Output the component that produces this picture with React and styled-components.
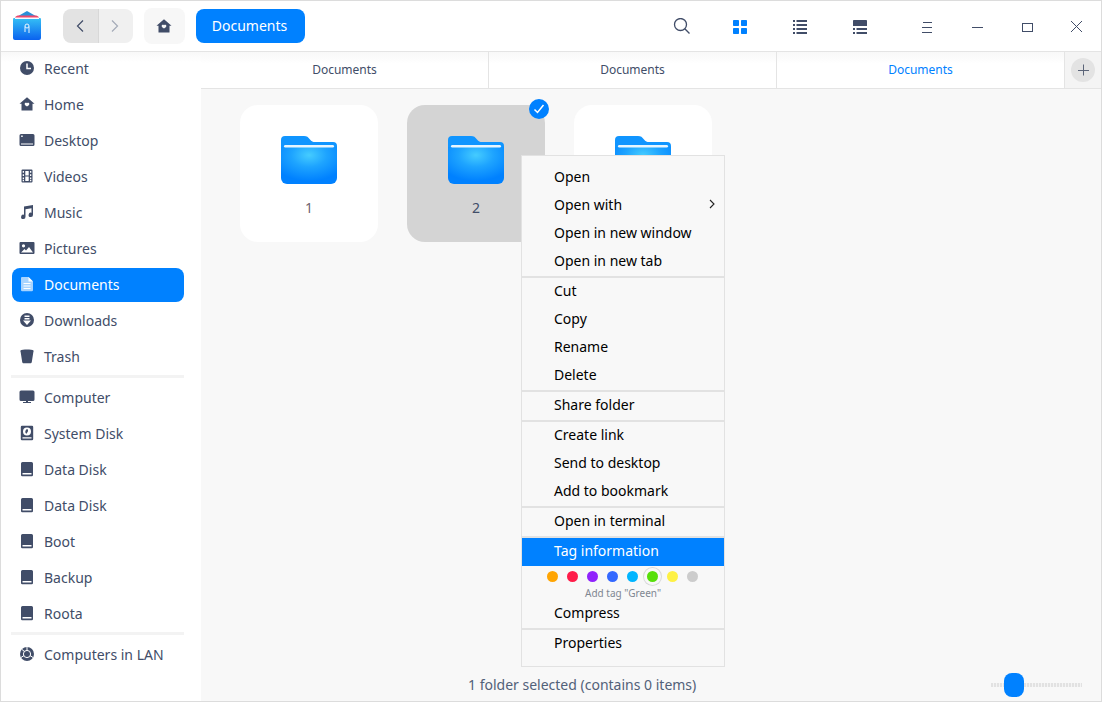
import React from "react"
import styled, { createGlobalStyle } from "styled-components"

const GlobalStyle = createGlobalStyle`
html, body {
    margin: 0;
    padding: 0;
    background: #fff;
}
* {
    box-sizing: border-box;
}
`

const INK = "#414d68"
const BLUE = "#0081ff"

const Window = styled.div`
position: relative;
display: flex;
flex-direction: column;
width: 1102px;
height: 702px;
border: 1px solid #dcdcdc;
background: #fff;
font-family: "Noto Sans", sans-serif;
font-size: 14px;
color: ${INK};
overflow: hidden;
`

const TitleBar = styled.header`
display: flex;
align-items: center;
height: 51px;
flex-shrink: 0;
padding-left: 11px;
border-bottom: 1px solid #e4e4e4;
`

const Logo = styled.svg`
width: 30px;
height: 30px;
margin-right: 21px;
`

const NavGroup = styled.div`
display: flex;
width: 70px;
height: 34px;
border-radius: 8px;
overflow: hidden;
margin-right: 11px;
`

const NavButton = styled.div`
display: flex;
align-items: center;
justify-content: center;
flex: 1;
padding-right: 1px;
background: ${(p) => (p.$active ? "#e3e3e3" : "#f0f0f0")};
border-right: ${(p) => (p.$active ? "1px solid #d8d8d8" : "none")};
color: ${(p) => (p.$active ? INK : "#a4abb8")};
`

const HomeButton = styled.div`
display: flex;
align-items: center;
justify-content: center;
width: 41px;
height: 36px;
padding-right: 2px;
border-radius: 8px;
background: #f7f7f7;
margin-right: 11px;
color: ${INK};
`

const CrumbButton = styled.div`
display: flex;
align-items: center;
justify-content: center;
width: 109px;
height: 34px;
padding: 0 2px 2px 0;
border-radius: 8px;
background: ${BLUE};
color: #fff;
`

const ToolSlot = styled.div`
position: absolute;
top: 0;
left: ${(p) => p.$x}px;
width: 50px;
height: 52px;
display: flex;
align-items: center;
justify-content: center;
color: ${(p) => p.$color || INK};
`

const Body = styled.div`
display: flex;
flex: 1;
min-height: 0;
`

const Sidebar = styled.nav`
width: 200px;
flex-shrink: 0;
padding: 0 17px 0 11px;
background: linear-gradient(#f8f8f8, #fff 10px);
`

const SideItem = styled.div`
display: flex;
align-items: center;
gap: 9px;
height: 34px;
margin-bottom: 2px;
padding: 0 0 2px 7px;
border-radius: 8px;
background: ${(p) => (p.$active ? BLUE : "transparent")};
color: ${(p) => (p.$active ? "#fff" : INK)};
`

const SideIcon = styled.svg`
width: 16px;
height: 16px;
flex-shrink: 0;
`

const SideDivider = styled.div`
height: 3px;
margin: -1px 0 3px -1px;
background: #f3f3f3;
`

const Main = styled.main`
display: flex;
flex-direction: column;
flex: 1;
min-width: 0;
background: #f8f8f8;
`

const TabBar = styled.div`
display: flex;
height: 37px;
flex-shrink: 0;
border-bottom: 1px solid #e4e4e4;
`

const Tab = styled.div`
display: flex;
align-items: center;
justify-content: center;
width: 288px;
padding-bottom: 2px;
font-size: 12px;
border-right: 1px solid #e4e4e4;
background: linear-gradient(#f8f8f8, #fff 12px);
color: ${(p) => (p.$active ? BLUE : INK)};
`

const AddTabCell = styled.div`
display: flex;
align-items: center;
justify-content: center;
flex: 1;
background: #f4f4f4;
`

const AddTabButton = styled.div`
display: flex;
align-items: center;
justify-content: center;
width: 24px;
height: 24px;
border-radius: 50%;
background: #e3e3e3;
color: #5b6478;
`

const FileGrid = styled.div`
display: flex;
align-items: flex-start;
gap: 29px;
flex: 1;
padding: 16px 39px;
`

const FileCard = styled.div`
position: relative;
display: flex;
flex-direction: column;
align-items: center;
width: 138px;
height: 137px;
padding-top: 31px;
border-radius: 18px;
background: ${(p) => (p.$selected ? "#d4d4d4" : "#fff")};
`

const FileName = styled.span`
margin-top: 14px;
line-height: 20px;
color: ${(p) => (p.$selected ? INK : "#6e6470")};
`

const CheckBadge = styled.div`
position: absolute;
top: -6px;
right: -4px;
display: flex;
align-items: center;
justify-content: center;
width: 20px;
height: 20px;
border-radius: 50%;
background: ${BLUE};
`

const StatusBar = styled.footer`
position: relative;
display: flex;
align-items: center;
height: 36px;
flex-shrink: 0;
padding: 2px 0 0 267px;
color: #526179;
`

const SliderTrack = styled.div`
position: absolute;
left: 790px;
top: 18px;
width: 91px;
height: 4px;
background: repeating-linear-gradient(90deg, #e2e2e2 0 2px, #f4f4f4 2px 3px);
`

const SliderThumb = styled.div`
position: absolute;
left: 13px;
top: -10px;
width: 20px;
height: 24px;
border-radius: 8px;
background: ${BLUE};
`

const Menu = styled.div`
position: absolute;
left: 520px;
top: 154px;
width: 204px;
height: 512px;
padding: 8px 0;
border: 1px solid #e2e2e2;
background: #f8f8f8;
color: #000;
`

const MenuItem = styled.div`
display: flex;
align-items: center;
justify-content: space-between;
height: 28px;
padding: 0 8px 4px 32px;
background: ${(p) => (p.$active ? BLUE : "transparent")};
color: ${(p) => (p.$active ? "#fff" : "#000")};
`

const MenuDivider = styled.div`
height: 2px;
background: #e2e2e2;
`

const TagRow = styled.div`
display: flex;
align-items: center;
justify-content: center;
gap: 9px;
height: 20px;
padding-right: 1px;
`

const TagDot = styled.div`
width: 11px;
height: 11px;
border-radius: 50%;
background: ${(p) => p.$color};
box-shadow: ${(p) => (p.$picked ? "0 0 0 3px #f8f8f8, 0 0 0 4px #d9d9d9" : "none")};
`

const TagHint = styled.div`
height: 14px;
font-size: 10px;
line-height: 14px;
text-align: center;
color: #7f8792;
`

// sidebar glyphs, all on a 16 box
const glyphs = {
    recent: (
        <>
            <circle cx="8" cy="8" r="7" />
            <path d="M8 3.500v5h4" fill="none" stroke="#fff" strokeWidth="1.500" />
        </>
    ),
    home: <path fillRule="evenodd" d="M8 1.200l7.500 6.500h-2v6.800h-11V7.700h-2zM8 7.300c-.7-.9-2.500-.5-2.300.9.100.9 1.400 1.600 2.300 2.400.9-.8 2.200-1.500 2.300-2.400.2-1.400-1.600-1.800-2.300-.9z" />,
    desktop: <path fillRule="evenodd" d="M2 2h12a1.500 1.500 0 0 1 1.500 1.500v9A1.500 1.500 0 0 1 14 14H2a1.500 1.500 0 0 1-1.500-1.500v-9A1.500 1.500 0 0 1 2 2zM2 11.500v1.100h12v-1.100zM2.200 3.500V5h1.500V3.500z" />,
    videos: <path fillRule="evenodd" d="M3.500 1.500h9a1 1 0 0 1 1 1v11a1 1 0 0 1-1 1h-9a1 1 0 0 1-1-1v-11a1 1 0 0 1 1-1zM3.700 3v1.800h1.300V3zM3.700 6.200V8h1.300V6.200zM3.700 9.400v1.800h1.300V9.400zM3.700 12v1.300h1.300V12zM11 3v1.800h1.300V3zM11 6.200V8h1.300V6.200zM11 9.400v1.800h1.300V9.400zM11 12v1.300h1.300V12zM6.300 3v4.400h3.400V3zM6.300 8.600V13h3.400V8.600z" />,
    music: <path d="M5 2.500l9-1.500v9.800a2.200 2.200 0 1 1-1.500-2V4.200L6.500 5.200v7.600A2.200 2.200 0 1 1 5 10.800z" />,
    pictures: <path fillRule="evenodd" d="M1.500 2h13a1 1 0 0 1 1 1v10a1 1 0 0 1-1 1h-13a1 1 0 0 1-1-1V3a1 1 0 0 1 1-1zM4.500 4.200a1.600 1.600 0 1 0 0 3.200 1.600 1.600 0 0 0 0-3.200zM2 12.500h12L10 7 7 10.500 5.500 9z" />,
    documents: (
        <>
            <path d="M3 1h6.500L14 5.500V14a1.200 1.200 0 0 1-1.200 1.200H3.200A1.200 1.200 0 0 1 2 14V2a1 1 0 0 1 1-1z" fill="#a8d4ff" />
            <path d="M9.500 1v4.500H14z" fill="#fff" />
            <path d="M4.500 7.500h7M4.500 10h7M4.500 12.500h7" stroke="#fff" strokeWidth="1" />
        </>
    ),
    downloads: <path fillRule="evenodd" d="M8 1a7 7 0 1 1 0 14A7 7 0 0 1 8 1zM5.500 3.500V5h5V3.500zM5.500 6v1.500h5V6zM4 8.500L8 13l4-4.500z" />,
    trash: <path d="M1.500 2.500C3 1.300 13 1.300 14.500 2.500c.3.400.2.900-.1 1.200L12.800 14c-.1.800-.8 1.300-1.600 1.300H4.800c-.8 0-1.500-.5-1.600-1.300L1.600 3.700c-.3-.3-.4-.8-.1-1.200z" />,
    computer: <path d="M2 1.500h12A1.500 1.500 0 0 1 15.500 3v7.500A1.500 1.500 0 0 1 14 12H9v1h3v1H4v-1h3v-1H2A1.500 1.500 0 0 1 .5 10.500V3A1.500 1.500 0 0 1 2 1.500z" />,
    system: (
        <path fillRule="evenodd" d="M3 .8h10a1.200 1.200 0 0 1 1.200 1.200v12a1.200 1.200 0 0 1-1.200 1.200H3A1.200 1.200 0 0 1 1.800 14V2A1.200 1.200 0 0 1 3 .8zM8 2.500a4 4 0 1 0 0 8 4 4 0 0 0 0-8zM8 4c.8.400 1.200 1.200 1 2.200L7.500 8.800C6.400 8.200 6 7 6.500 5.800 6.800 5 7.300 4.300 8 4zM3.500 12.200v1.300h9v-1.300z" />
    ),
    disk: <path fillRule="evenodd" d="M3.500 1h9A1.500 1.500 0 0 1 14 2.500V14a1.200 1.200 0 0 1-1.200 1.200H3.200A1.200 1.200 0 0 1 2 14V2.500A1.500 1.500 0 0 1 3.500 1zM3.500 12v1.600h9V12z" />,
    lan: (
        <>
            <circle cx="8" cy="8" r="7" />
            <circle cx="8" cy="8" r="3.600" fill="none" stroke="#fff" strokeWidth="1" />
            <path d="M8 1v3M14 11.500l-3-2M2 11.500l3-2M3 3.500l2.500 2" stroke="#fff" strokeWidth="1" />
        </>
    ),
}

const SideGlyph = ({ name, color }) => (
    <SideIcon viewBox="0 0 16 16" fill={color || INK}>
        {glyphs[name]}
    </SideIcon>
)

const places = [
    ["recent", "Recent"],
    ["home", "Home"],
    ["desktop", "Desktop"],
    ["videos", "Videos"],
    ["music", "Music"],
    ["pictures", "Pictures"],
    ["documents", "Documents"],
    ["downloads", "Downloads"],
    ["trash", "Trash"],
]

const disks = [
    ["computer", "Computer"],
    ["system", "System Disk"],
    ["disk", "Data Disk"],
    ["disk", "Data Disk"],
    ["disk", "Boot"],
    ["disk", "Backup"],
    ["disk", "Roota"],
]

const tagColors = ["#ffa503", "#ff1c49", "#9023fc", "#3468ff", "#00b5ff", "#58df0a", "#fef144", "#cccccc"]

const FolderIcon = () => (
    <svg width="56" height="48" viewBox="0 0 56 48">
        <defs>
            <radialGradient id="folderBody" cx="50%" cy="22%" r="70%">
                <stop offset="0" stopColor="#45ccff" />
                <stop offset=".45" stopColor="#1ea4ff" />
                <stop offset="1" stopColor="#0081ff" />
            </radialGradient>
        </defs>
        <path d="M4 0H23c3 0 4 1 6 3.500C30.500 5.500 32 6 34 6h18a4 4 0 0 1 4 4v10H0V4a4 4 0 0 1 4-4z" fill="#1095ff" />
        <path d="M0 11H56V42a6 6 0 0 1-6 6H6a6 6 0 0 1-6-6z" fill="url(#folderBody)" />
        <rect x="3" y="9" width="50" height="2.500" rx="1.200" fill="#e6f5ff" />
    </svg>
)

const Folder = ({ name, selected }) => (
    <FileCard $selected={selected}>
        <FolderIcon />
        <FileName $selected={selected}>{name}</FileName>
        {selected && (
            <CheckBadge>
                <svg width="12" height="12" viewBox="0 0 12 12">
                    <path d="M1.500 6.500l3 3 6-7.500" fill="none" stroke="#fff" strokeWidth="1.500" />
                </svg>
            </CheckBadge>
        )}
    </FileCard>
)

function App() {
    return (
        <>
            <GlobalStyle />
            <Window>
                <TitleBar>
                    <Logo viewBox="0 0 30 30">
                        <defs>
                            <linearGradient id="logoBody" x1="0" y1="0" x2="0" y2="1">
                                <stop offset="0" stopColor="#35c0f5" />
                                <stop offset="1" stopColor="#0a62ef" />
                            </linearGradient>
                        </defs>
                        <path d="M1 8L15 0l14 8z" fill="#2a8fd8" />
                        <path d="M3 6.500C4 5 5 4.500 7 4.500h16c2 0 3 .5 4 2V8H3z" fill="#f0486a" />
                        <path d="M1 8.500C1 7.500 1.500 7 3 7h24c1.500 0 2 .5 2 1.500V27a2 2 0 0 1-2 2H3a2 2 0 0 1-2-2z" fill="url(#logoBody)" />
                        <rect x="3" y="6.500" width="24" height="1.500" fill="#f4f8ff" />
                        <circle cx="15" cy="15" r="2" fill="none" stroke="#e8f4ff" strokeWidth="1" />
                        <path d="M13 15.500V21M17 15.500V22" stroke="#e8f4ff" strokeWidth="1" fill="none" />
                    </Logo>
                    <NavGroup>
                        <NavButton $active>
                            <svg width="10" height="14" viewBox="0 0 10 14">
                                <path d="M8 1.500L2.500 7 8 12.500" fill="none" stroke="currentColor" strokeWidth="1.200" />
                            </svg>
                        </NavButton>
                        <NavButton>
                            <svg width="10" height="14" viewBox="0 0 10 14">
                                <path d="M2 1.500L7.500 7 2 12.500" fill="none" stroke="currentColor" strokeWidth="1.200" />
                            </svg>
                        </NavButton>
                    </NavGroup>
                    <HomeButton>
                        <SideGlyph name="home" />
                    </HomeButton>
                    <CrumbButton>Documents</CrumbButton>
                    <ToolSlot $x={655}>
                        <svg width="18" height="18" viewBox="0 0 18 18" fill="none" stroke="currentColor" strokeWidth="1.300">
                            <circle cx="8.500" cy="6.500" r="6" />
                            <path d="M12.800 10.800l4.700 4.700" />
                        </svg>
                    </ToolSlot>
                    <ToolSlot $x={714} $color={BLUE}>
                        <svg width="14" height="14" viewBox="0 0 14 14" fill="currentColor">
                            <rect width="6" height="6" rx=".7" />
                            <rect x="8" width="6" height="6" rx=".7" />
                            <rect y="8" width="6" height="6" rx=".7" />
                            <rect x="8" y="8" width="6" height="6" rx=".7" />
                        </svg>
                    </ToolSlot>
                    <ToolSlot $x={774}>
                        <svg width="14" height="14" viewBox="0 0 14 14" fill="currentColor">
                            <path d="M0 0h2v2H0zM3.500 0H14v2H3.500zM0 4h2v2H0zM3.500 4H14v2H3.500zM0 8h2v2H0zM3.500 8H14v2H3.500zM0 12h2v2H0zM3.500 12H14v2H3.500z" />
                        </svg>
                    </ToolSlot>
                    <ToolSlot $x={834}>
                        <svg width="14" height="14" viewBox="0 0 14 14" fill="currentColor">
                            <path d="M.8 0h12.400a.8.8 0 0 1 .8.8V6H0V.8A.8.8 0 0 1 .8 0zM0 8h2v2H0zM3.500 8H14v2H3.500zM0 12h2v2H0zM3.500 12H14v2H3.500z" />
                        </svg>
                    </ToolSlot>
                    <ToolSlot $x={901}>
                        <svg width="12" height="14" viewBox="0 0 12 14" fill="currentColor">
                            <path d="M2 2h9v1H2zM1 7h10v1H1zM1 12h10v1H1z" />
                        </svg>
                    </ToolSlot>
                    <ToolSlot $x={951}>
                        <svg width="12" height="4" viewBox="0 0 12 4" fill="currentColor">
                            <path d="M1 2h11v1H1z" />
                        </svg>
                    </ToolSlot>
                    <ToolSlot $x={1001}>
                        <svg width="12" height="14" viewBox="0 0 12 14" fill="none" stroke="currentColor">
                            <rect x="1.500" y="3.500" width="10" height="8" />
                        </svg>
                    </ToolSlot>
                    <ToolSlot $x={1050}>
                        <svg width="14" height="14" viewBox="0 0 14 14" fill="none" stroke="currentColor">
                            <path d="M2 1l11 11M13 1L2 12" />
                        </svg>
                    </ToolSlot>
                </TitleBar>
                <Body>
                    <Sidebar>
                        {places.map(([icon, label]) => {
                            const active = label === "Documents"
                            return (
                                <SideItem key={label} $active={active}>
                                    <SideGlyph name={icon} />
                                    {label}
                                </SideItem>
                            )
                        })}
                        <SideDivider />
                        {disks.map(([icon, label], i) => (
                            <SideItem key={i}>
                                <SideGlyph name={icon} />
                                {label}
                            </SideItem>
                        ))}
                        <SideDivider />
                        <SideItem>
                            <SideGlyph name="lan" />
                            Computers in LAN
                        </SideItem>
                    </Sidebar>
                    <Main>
                        <TabBar>
                            <Tab>Documents</Tab>
                            <Tab>Documents</Tab>
                            <Tab $active>Documents</Tab>
                            <AddTabCell>
                                <AddTabButton>
                                    <svg width="14" height="14" viewBox="0 0 14 14" stroke="currentColor">
                                        <path d="M7.500 1.500v11M2 7.500h11" />
                                    </svg>
                                </AddTabButton>
                            </AddTabCell>
                        </TabBar>
                        <FileGrid>
                            <Folder name="1" />
                            <Folder name="2" selected />
                            <Folder name="3" />
                        </FileGrid>
                        <StatusBar>
                            1 folder selected (contains 0 items)
                            <SliderTrack>
                                <SliderThumb />
                            </SliderTrack>
                        </StatusBar>
                    </Main>
                </Body>
                <Menu>
                    <MenuItem>Open</MenuItem>
                    <MenuItem>
                        Open with
                        <svg width="8" height="10" viewBox="0 0 8 10">
                            <path d="M2 1l4 4-4 4" fill="none" stroke="#222" strokeWidth="1.100" />
                        </svg>
                    </MenuItem>
                    <MenuItem>Open in new window</MenuItem>
                    <MenuItem>Open in new tab</MenuItem>
                    <MenuDivider />
                    <MenuItem>Cut</MenuItem>
                    <MenuItem>Copy</MenuItem>
                    <MenuItem>Rename</MenuItem>
                    <MenuItem>Delete</MenuItem>
                    <MenuDivider />
                    <MenuItem>Share folder</MenuItem>
                    <MenuDivider />
                    <MenuItem>Create link</MenuItem>
                    <MenuItem>Send to desktop</MenuItem>
                    <MenuItem>Add to bookmark</MenuItem>
                    <MenuDivider />
                    <MenuItem>Open in terminal</MenuItem>
                    <MenuDivider />
                    <MenuItem $active>Tag information</MenuItem>
                    <TagRow>
                        {tagColors.map((c) => (
                            <TagDot key={c} $color={c} $picked={c === "#58df0a"} />
                        ))}
                    </TagRow>
                    <TagHint>Add tag "Green"</TagHint>
                    <MenuItem>Compress</MenuItem>
                    <MenuDivider />
                    <MenuItem>Properties</MenuItem>
                </Menu>
            </Window>
        </>
    )
}

export default App
